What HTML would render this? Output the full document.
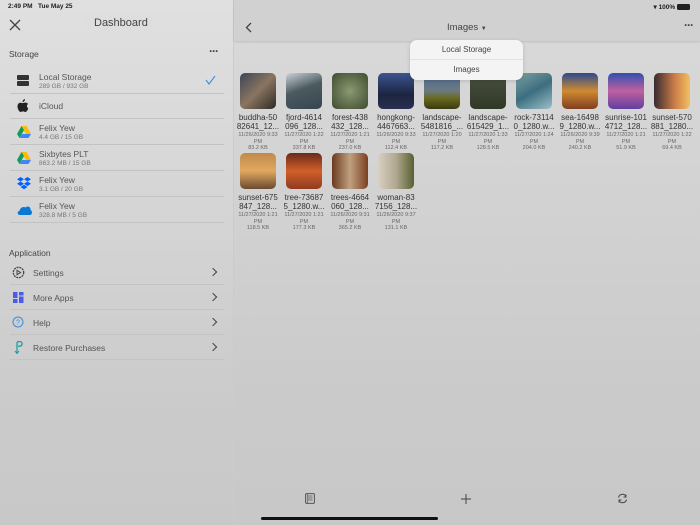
<!DOCTYPE html>
<html><head><meta charset="utf-8"><style>
*{margin:0;padding:0;box-sizing:border-box}
body{width:700px;height:525px;overflow:hidden;font-family:"Liberation Sans",sans-serif;background:#cbcbcb;position:relative;color:#444}
#left{position:absolute;left:0;top:0;width:233px;height:525px;background:linear-gradient(#e0e0e0,#d8d8d8 150px,#cbcbcb 400px,#c8c8c8)}
#right{position:absolute;left:234px;top:0;width:466px;height:525px;background:linear-gradient(#d8d8d8 40px,#d6d6d6 100px,#cacaca 400px,#c8c8c8)}
#hdr{position:absolute;left:0;top:0;width:466px;height:41px;background:#d1d1d1;box-shadow:0 1px 2px rgba(0,0,0,.12)}
.abs{position:absolute}
.row{position:absolute;left:10px;width:214px;border-bottom:1px solid #c3c3c3}
.t1{position:absolute;left:29px;font-size:8.5px;color:#555}
.t2{position:absolute;left:29px;font-size:6.5px;color:#777}
.ic{position:absolute;left:7px}
.arow{position:absolute;left:10px;width:214px;height:25px;border-bottom:1px solid #c3c3c3}
.arow span{position:absolute;left:23px;top:8px;font-size:8.5px;color:#555}
.arow .chev{position:absolute;right:8px;top:9px;width:6px;height:6px;border-right:1.3px solid #444;border-top:1.3px solid #444;transform:rotate(45deg)}
.it{position:absolute;width:46px;text-align:center}
.th{width:36px;height:36px;border-radius:5px;margin:0 auto}
.nm{font-size:8px;color:#333;line-height:9px;margin-top:4px;white-space:nowrap;margin-left:-3px;margin-right:-3px}
.dt{font-size:5.5px;color:#666;line-height:6.5px;margin-top:1px;white-space:nowrap;margin-left:-3px;margin-right:-3px}
.sz{font-size:5.5px;color:#666;margin-top:0}
.dots{font-size:12px;color:#444;font-weight:bold;letter-spacing:-1px}
</style></head><body>
<div id="left">
 <div class="abs" style="left:8px;top:3px;font-size:6.5px;color:#222;font-weight:bold">2:49 PM &nbsp; Tue May 25</div>
 <svg class="abs" style="left:9px;top:19px" width="12" height="12"><path d="M1 1L11 11M11 1L1 11" stroke="#444" stroke-width="1.3"/></svg>
 <div class="abs" style="left:85px;top:15px;width:68px;height:19px;background:#dedede"></div>
 <div class="abs" style="left:94px;top:17px;font-size:11px;color:#444">Dashboard</div>
 <div class="abs" style="left:9px;top:49px;font-size:8.5px;color:#444">Storage</div>
 <div class="abs dots" style="left:209px;top:44px">···</div>
 <div class="row" style="top:68px;height:26px">
  <div class="ic" style="top:7px;width:12px;height:5px;background:#333;border-radius:1px"></div>
  <div class="ic" style="top:13px;width:12px;height:5px;background:#333;border-radius:1px"></div>
  <div class="t1" style="top:4px">Local Storage</div><div class="t2" style="top:15px">289 GB / 932 GB</div>
  <svg class="abs" style="left:195px;top:7px" width="11" height="10"><path d="M1 5L4 9L10 1" stroke="#4a90e2" stroke-width="1.2" fill="none"/></svg>
 </div>
 <div class="row" style="top:94px;height:25px">
  <svg class="ic" style="top:5px" width="12" height="14"><path d="M8 0C8 2 6.5 3 5.5 3C5.5 1.5 7 0 8 0ZM6 4C7 4 8 3.4 9 3.6C10 3.8 10.8 4.4 11 5C9.5 6 9.6 8.5 11.3 9.2C10.8 10.8 9.6 13 8.4 13C7.4 13 7.2 12.4 6 12.4C4.8 12.4 4.5 13 3.6 13C2.3 13 0.5 10 0.5 7.5C0.5 5 2 3.8 3.4 3.8C4.5 3.8 5.2 4.4 6 4Z" fill="#222"/></svg>
  <div class="t1" style="top:7px">iCloud</div>
 </div>
 <div class="row" style="top:119px;height:26px">
  <svg class="ic" style="top:7px" width="14" height="12"><path d="M4.5 0H9.5L14 8H9Z" fill="#fbbc04"/><path d="M4.5 0L0 8L2.5 12L7 4Z" fill="#0f9d58"/><path d="M2.5 12H11.5L14 8H5Z" fill="#4285f4"/></svg>
  <div class="t1" style="top:4px">Felix Yew</div><div class="t2" style="top:15px">4.4 GB / 15 GB</div>
 </div>
 <div class="row" style="top:145px;height:26px">
  <svg class="ic" style="top:7px" width="14" height="12"><path d="M4.5 0H9.5L14 8H9Z" fill="#fbbc04"/><path d="M4.5 0L0 8L2.5 12L7 4Z" fill="#0f9d58"/><path d="M2.5 12H11.5L14 8H5Z" fill="#4285f4"/></svg>
  <div class="t1" style="top:4px">Sixbytes PLT</div><div class="t2" style="top:15px">863.2 MB / 15 GB</div>
 </div>
 <div class="row" style="top:171px;height:26px">
  <svg class="ic" style="top:6px" width="14" height="14"><path d="M3.5 0L7 2.2L3.5 4.5L0 2.2ZM10.5 0L14 2.2L10.5 4.5L7 2.2ZM3.5 4.5L7 6.8L3.5 9L0 6.8ZM10.5 4.5L14 6.8L10.5 9L7 6.8ZM3.5 10L7 7.8L10.5 10L7 12.3Z" fill="#0061fe"/></svg>
  <div class="t1" style="top:4px">Felix Yew</div><div class="t2" style="top:15px">3.1 GB / 20 GB</div>
 </div>
 <div class="row" style="top:197px;height:26px">
  <svg class="ic" style="top:8px" width="15" height="10"><path d="M3 10C0 10 0 6 2.5 6C3 3 6 1 8.5 2.5C10 0.5 14 1.5 13.5 5C15.5 5.5 15.5 10 13 10Z" fill="#0a78d4"/></svg>
  <div class="t1" style="top:4px">Felix Yew</div><div class="t2" style="top:15px">328.8 MB / 5 GB</div>
 </div>
 <div class="abs" style="left:9px;top:248px;font-size:8.5px;color:#444">Application</div>
 <div class="arow" style="top:260px">
  <svg class="abs" style="left:2px;top:6px" width="13" height="13"><circle cx="6.5" cy="6.5" r="5.2" fill="none" stroke="#444" stroke-width="1.3" stroke-dasharray="2 .8"/><path d="M5 4.3L8.6 6.5L5 8.7Z" fill="none" stroke="#444" stroke-width="1"/></svg>
  <span>Settings</span><div class="chev"></div></div>
 <div class="arow" style="top:285px">
  <svg class="abs" style="left:3px;top:7px" width="11" height="11"><rect x="0" y="0" width="4.5" height="6" fill="#4a5be8"/><rect x="6" y="0" width="4.5" height="3.5" fill="#4a5be8"/><rect x="0" y="7" width="4.5" height="4" fill="#4a5be8"/><rect x="6" y="4.5" width="4.5" height="6.5" fill="#4a5be8"/></svg>
  <span>More Apps</span><div class="chev"></div></div>
 <div class="arow" style="top:310px">
  <svg class="abs" style="left:2px;top:6px" width="12" height="12"><circle cx="6" cy="6" r="5" fill="none" stroke="#3a8de0" stroke-width="1"/><text x="6" y="8.5" font-size="7" text-anchor="middle" fill="#3a8de0" font-family="Liberation Sans">?</text></svg>
  <span>Help</span><div class="chev"></div></div>
 <div class="arow" style="top:335px">
  <svg class="abs" style="left:4px;top:6px" width="10" height="13"><path d="M3 12V2C3 1 4 0.5 5.5 0.5C7.5 0.5 8.5 2 8 3.5C7.5 5 6 5.5 4 5" fill="none" stroke="#1a9aa0" stroke-width="1.2"/><path d="M1 10L3 12.5L5 10" fill="none" stroke="#1a9aa0" stroke-width="1"/></svg>
  <span>Restore Purchases</span><div class="chev"></div></div>
</div>
<div id="right">
 <div id="hdr"></div>
 <div class="abs" style="right:10px;top:3px;font-size:6.5px;color:#222;font-weight:bold">&#x25BE; 100% <span style="display:inline-block;width:13px;height:6px;background:#222;border-radius:1.5px;vertical-align:-1px"></span></div>
 <svg class="abs" style="left:11px;top:22px" width="7" height="11"><path d="M6 1L1.5 5.5L6 10" stroke="#444" stroke-width="1.3" fill="none"/></svg>
 <div class="abs" style="left:213px;top:22px;font-size:9.5px;color:#444">Images <span style="font-size:6px">▼</span></div>
 <div class="abs dots" style="right:7px;top:18px">···</div>
 <div class="abs" style="left:176px;top:40px;width:113px;height:40px;background:#f4f4f4;border-radius:7px;box-shadow:0 1px 4px rgba(0,0,0,.15);z-index:5">
  <div style="height:20px;border-bottom:1px solid #e2e2e2;text-align:center;font-size:8px;line-height:19px;color:#444">Local Storage</div>
  <div style="text-align:center;font-size:8px;line-height:20px;color:#444">Images</div>
 </div>
 <div class="it" style="left:1px;top:73px"><div class="th" style="background:linear-gradient(135deg,#3c4656,#8a7560,#2e2a26)"></div><div class="nm">buddha-50<br>82641_12...</div><div class="dt">11/26/2020 9:33<br>PM</div><div class="sz">83.2 KB</div></div>
 <div class="it" style="left:47px;top:73px"><div class="th" style="background:linear-gradient(160deg,#c9d2d8,#4c5a60 45%,#354550)"></div><div class="nm">fjord-4614<br>096_128...</div><div class="dt">11/27/2020 1:22<br>PM</div><div class="sz">337.8 KB</div></div>
 <div class="it" style="left:93px;top:73px"><div class="th" style="background:radial-gradient(#8a9a70,#3e4a30)"></div><div class="nm">forest-438<br>432_128...</div><div class="dt">11/27/2020 1:21<br>PM</div><div class="sz">237.0 KB</div></div>
 <div class="it" style="left:139px;top:73px"><div class="th" style="background:linear-gradient(#3c5490,#1c2540 60%,#2a2f50)"></div><div class="nm">hongkong-<br>4467663...</div><div class="dt">11/26/2020 9:33<br>PM</div><div class="sz">112.4 KB</div></div>
 <div class="it" style="left:185px;top:73px"><div class="th" style="background:linear-gradient(#4c6a96,#6c7a80 50%,#6a6a20 70%,#3a3a10)"></div><div class="nm">landscape-<br>5481816_...</div><div class="dt">11/27/2020 1:20<br>PM</div><div class="sz">117.2 KB</div></div>
 <div class="it" style="left:231px;top:73px"><div class="th" style="background:linear-gradient(#4a5040,#303826)"></div><div class="nm">landscape-<br>615429_1...</div><div class="dt">11/27/2020 1:33<br>PM</div><div class="sz">128.5 KB</div></div>
 <div class="it" style="left:277px;top:73px"><div class="th" style="background:linear-gradient(150deg,#7ea0a0,#3c6e80 50%,#9ac0c8)"></div><div class="nm">rock-73114<br>0_1280.w...</div><div class="dt">11/27/2020 1:24<br>PM</div><div class="sz">204.0 KB</div></div>
 <div class="it" style="left:323px;top:73px"><div class="th" style="background:linear-gradient(#2a4a90,#d08a30 50%,#804020)"></div><div class="nm">sea-16498<br>9_1280.w...</div><div class="dt">11/26/2020 9:39<br>PM</div><div class="sz">240.2 KB</div></div>
 <div class="it" style="left:369px;top:73px"><div class="th" style="background:linear-gradient(#3050b0,#c060a0 50%,#6040a0)"></div><div class="nm">sunrise-101<br>4712_128...</div><div class="dt">11/27/2020 1:21<br>PM</div><div class="sz">51.9 KB</div></div>
 <div class="it" style="left:415px;top:73px"><div class="th" style="background:linear-gradient(90deg,#3a2a30,#d0804a 60%,#f0c060)"></div><div class="nm">sunset-570<br>881_1280...</div><div class="dt">11/27/2020 1:22<br>PM</div><div class="sz">69.4 KB</div></div>
 <div class="it" style="left:1px;top:153px"><div class="th" style="background:linear-gradient(#c08a4a,#e0a860 50%,#6a4a30)"></div><div class="nm">sunset-675<br>847_128...</div><div class="dt">11/27/2020 1:21<br>PM</div><div class="sz">118.5 KB</div></div>
 <div class="it" style="left:47px;top:153px"><div class="th" style="background:linear-gradient(#6a2a1a,#d0602a 50%,#903a20)"></div><div class="nm">tree-73687<br>5_1280.w...</div><div class="dt">11/27/2020 1:21<br>PM</div><div class="sz">177.3 KB</div></div>
 <div class="it" style="left:93px;top:153px"><div class="th" style="background:linear-gradient(90deg,#6a3a20,#c0a080 50%,#7a4020)"></div><div class="nm">trees-4664<br>060_128...</div><div class="dt">11/26/2020 9:31<br>PM</div><div class="sz">365.2 KB</div></div>
 <div class="it" style="left:139px;top:153px"><div class="th" style="background:linear-gradient(90deg,#d8d0c0,#b0a890 50%,#5a6030)"></div><div class="nm">woman-83<br>7156_128...</div><div class="dt">11/26/2020 9:37<br>PM</div><div class="sz">131.1 KB</div></div>
 <svg class="abs" style="left:71px;top:493px" width="10" height="11"><rect x=".6" y=".6" width="8.8" height="9.8" rx="1" fill="none" stroke="#555" stroke-width="1"/><path d="M3 3H7.5M3 5H7.5M3 7H7.5M2.3 1V10" stroke="#555" stroke-width=".7"/></svg>
 <svg class="abs" style="left:227px;top:494px" width="10" height="10"><path d="M5 0V10M0 5H10" stroke="#444" stroke-width="1"/></svg>
 <svg class="abs" style="left:383px;top:493px" width="11" height="11"><path d="M1.5 4.5A4 4 0 0 1 9 3.5M9.5 6.5A4 4 0 0 1 2 7.5" fill="none" stroke="#444" stroke-width="1"/><path d="M9 1.5V4H6.5M2 9.5V7H4.5" fill="none" stroke="#444" stroke-width=".9"/></svg>
 <div class="abs" style="left:27px;top:517px;width:177px;height:3px;background:#111;border-radius:2px"></div>
</div>
</body></html>
